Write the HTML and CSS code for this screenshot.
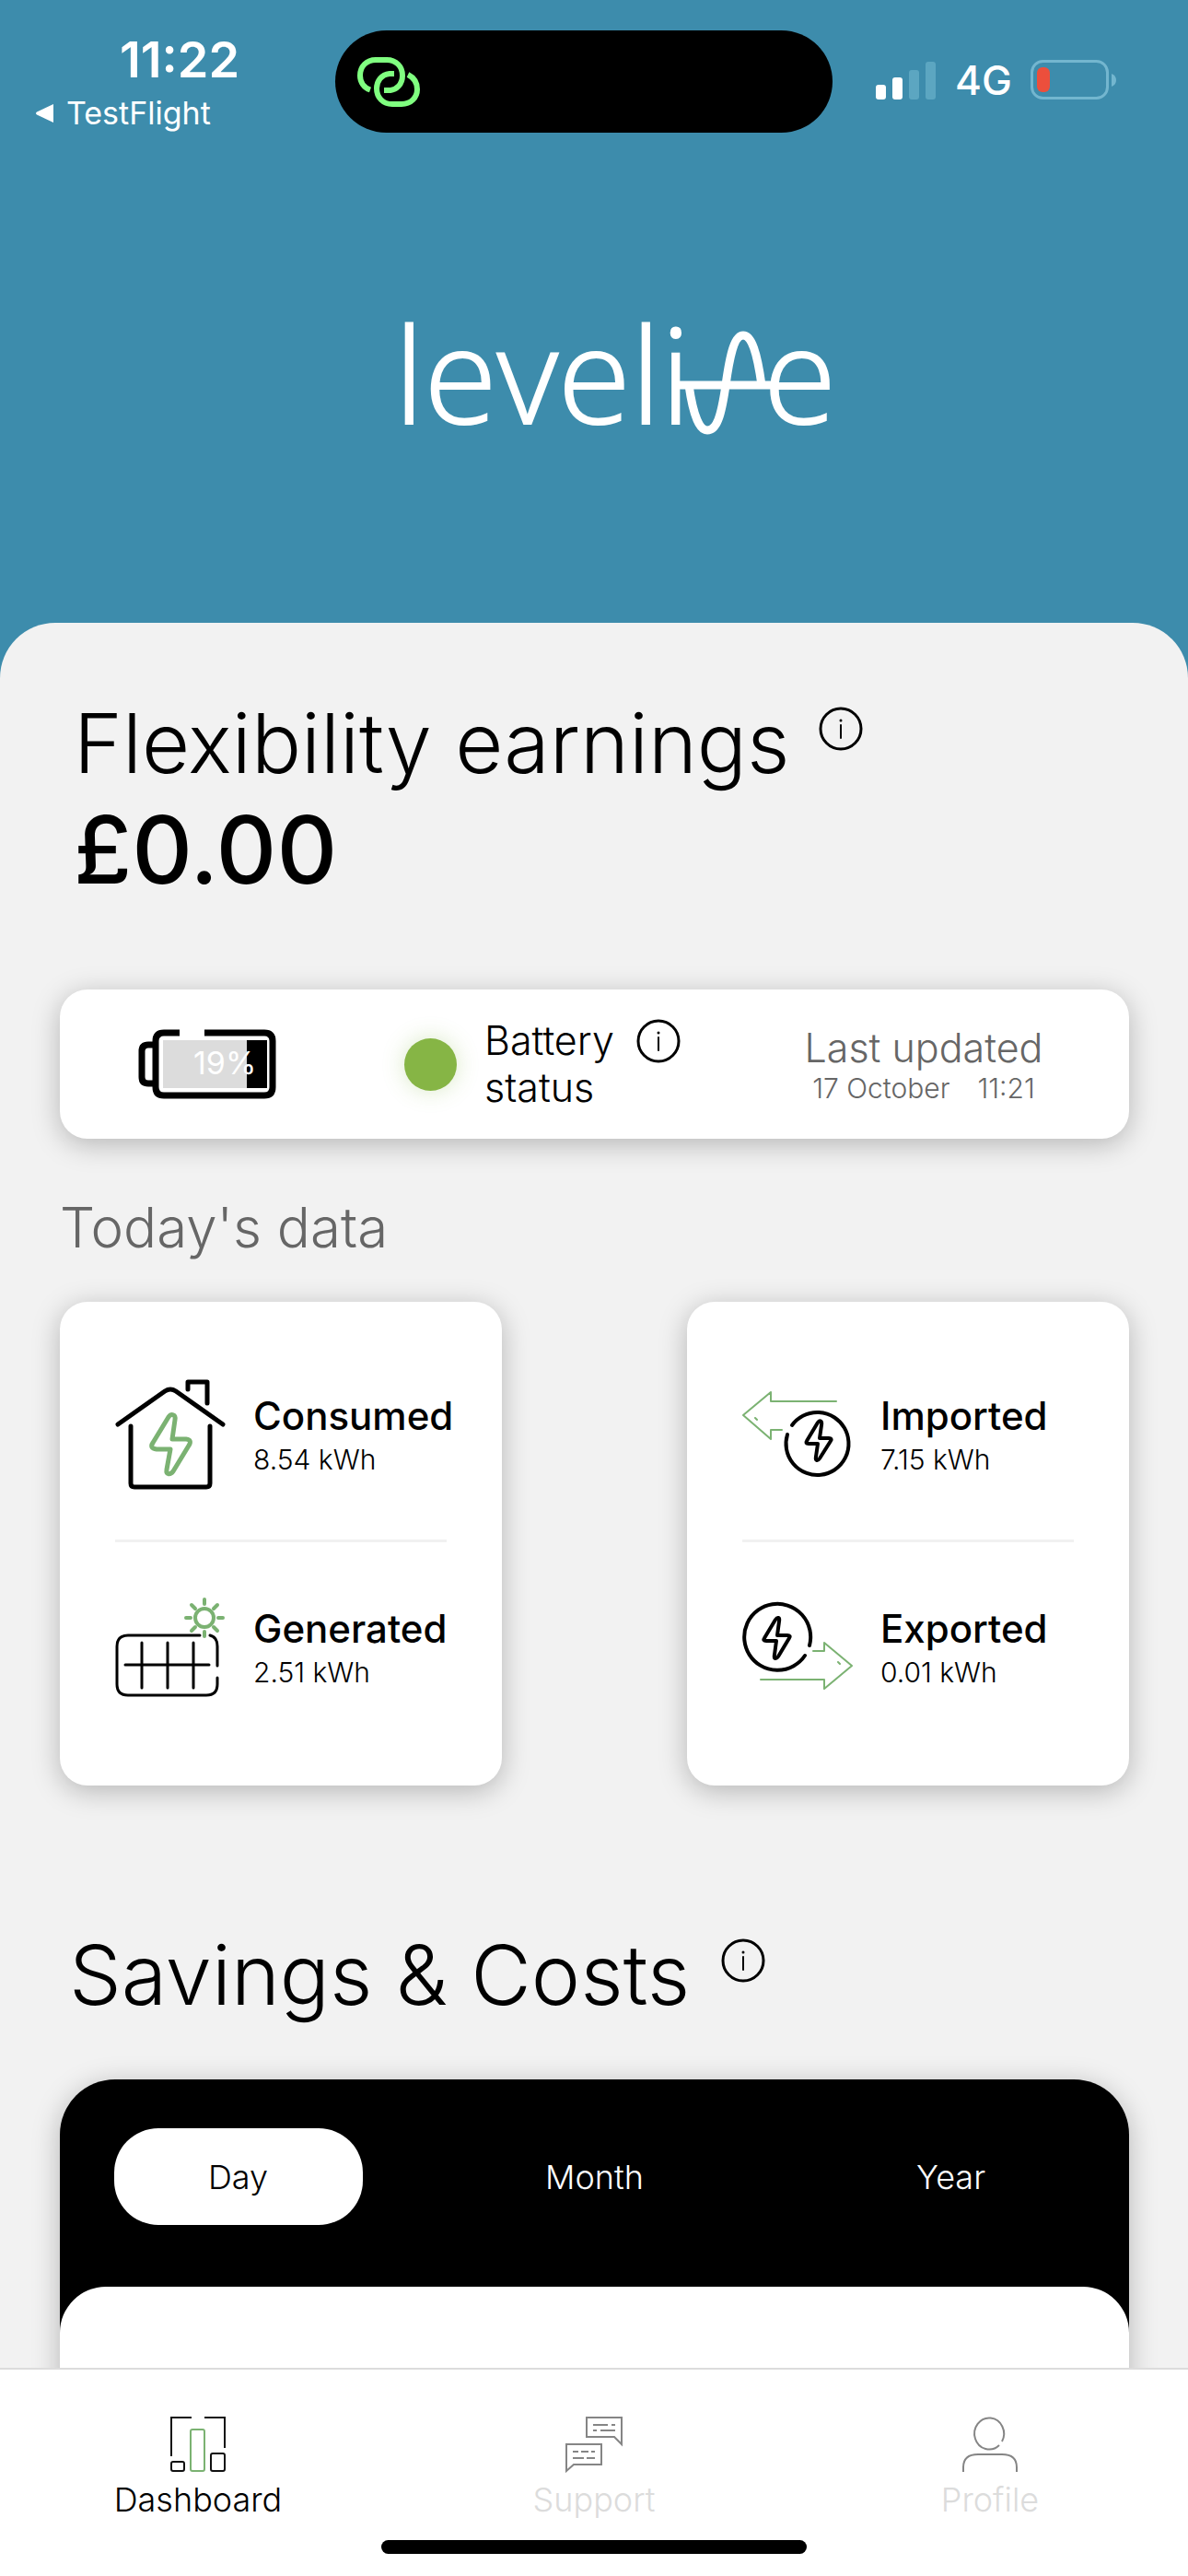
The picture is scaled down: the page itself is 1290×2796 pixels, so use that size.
FILE: index.html
```html
<!DOCTYPE html>
<html lang="en">
<head>
	<title>Levelise Dashboard</title>
	<meta charset="utf-8">
	<meta name="viewport" content="width=device-width, initial-scale=1">
	<link rel="stylesheet" href="styles.css">
</head>
<body>
	<div class="status-bar">
		<div class="status-left">
			<span class="time">11:22</span>
			<a class="back-link" href="#">
				<svg width="22" height="22" viewBox="0 0 22 22"><path d="M20 1v20L2 12.500q-2-1.500 0-3z" fill="#fff"/></svg>
				TestFlight
			</a>
		</div>
		<div class="island">
			<svg width="68" height="54" viewBox="0 0 68 54" fill="none" stroke="#80ff80" stroke-width="6">
				<path d="M14 35.500C7 33 3 27 3 20 3 10 10 3 20 3h12c10 0 17 7 17 17s-7 15.500-13 16h-7"/>
				<path d="M40 18h-5c-9 1-14 8-14 16 0 10 7 17 17 17h10c10 0 17-7 17-16 0-8-4-13-10-16"/>
			</svg>
		</div>
		<div class="status-right">
			<svg width="66" height="42" viewBox="0 0 66 42" fill="#fff">
				<rect x="0" y="26" width="11" height="16" rx="3"/>
				<rect x="18" y="18" width="11" height="24" rx="3"/>
				<rect x="36" y="10" width="11" height="32" rx="3" fill="#5ca6c1"/>
				<rect x="54" y="1" width="11" height="41" rx="3" fill="#5ca6c1"/>
			</svg>
			<span class="network">4G</span>
			<svg width="94" height="44" viewBox="0 0 94 44">
				<rect x="1.500" y="1.500" width="82" height="40" rx="12" fill="none" stroke="#73b6cf" stroke-width="3"/>
				<path d="M88 15q5 2 5 7t-5 7z" fill="#73b6cf"/>
				<rect x="7" y="8" width="14" height="27" rx="6" fill="#ec4f3c"/>
			</svg>
		</div>
	</div>

	<header class="brand">
		<svg width="490" height="204" viewBox="-10 -40 490 204" role="img" aria-label="levelise">
			<text class="logo-text" x="-3" y="119">leveli</text>
			<text class="logo-text" x="398" y="119">e</text>
			<path d="M302 77h108M317 77c5 35 12 49 20 49 10 0 15-14 20-49 5-36 10-54 19-54s15 18 20 54" fill="none" stroke="#fff" stroke-width="9"/>
		</svg>
	</header>

	<main class="panel">
		<section class="earnings">
			<div class="title-row">
				<h1>Flexibility earnings</h1>
				<button class="info" aria-label="About flexibility earnings">
					<svg width="48" height="48" viewBox="0 0 48 48"><use href="#info-icon"/></svg>
				</button>
			</div>
			<p class="amount">£0.00</p>
		</section>

		<section class="card battery-card">
			<div class="battery-cell">
				<svg width="150" height="76" viewBox="0 0 150 76">
					<path d="M45 4H28q-9 0-9 9v50q0 9 9 9h109q9 0 9-9V13q0-9-9-9H72M19 17h-8q-7 0-7 7v28q0 7 7 7h8" fill="none" stroke="#000" stroke-width="7"/>
					<rect x="27" y="12" width="91" height="52" fill="#dcdcdc"/>
					<rect x="118" y="12" width="22" height="52"/>
					<text class="charge" x="60" y="49">19%</text>
				</svg>
			</div>
			<div class="battery-cell battery-status">
				<span class="dot"></span>
				<span class="battery-label">Battery<br>status</span>
				<button class="info" aria-label="About battery status">
					<svg width="48" height="48" viewBox="0 0 48 48"><use href="#info-icon"/></svg>
				</button>
			</div>
			<div class="battery-cell updated">
				<span class="updated-title">Last updated</span>
				<span class="updated-time"><span>17 October</span><span>11:21</span></span>
			</div>
		</section>

		<h2 class="today">Today's data</h2>

		<section class="data-cards">
			<div class="card data-card">
				<div class="data-row">
					<svg width="120" height="120" viewBox="0 0 120 120" fill="none" stroke="#000" stroke-width="5" stroke-linecap="round" stroke-linejoin="round">
						<path d="M3 49 54 13q6-4 12 0l51 36M79 11V3h21v23M17 51v62q0 4 4 4h78q4 0 4-4V51"/>
						<path d="M58 41 41 69q-4 6 4 7h15l-4 22c-1 6 4 6 7 2l17-28q4-6-3-7H62l3-21c1-6-4-7-7-3z" stroke="#7bb272"/>
					</svg>
					<div class="data-text">
						<span class="data-name">Consumed</span>
						<span class="data-value">8.54 kWh</span>
					</div>
				</div>
				<div class="data-row">
					<svg width="120" height="120" viewBox="0 0 120 120" fill="none" stroke="#000" stroke-width="3" stroke-linecap="round">
						<path d="M92 47H14Q2 47 2 59v41q0 12 12 12h85q12 0 12-12V93M103 47q8 2 8 12v21M11 79h91M29 55v49M57 55v49M85 55v49"/>
						<g stroke="#7bb272" stroke-width="4">
							<circle cx="97" cy="28" r="10"/>
							<path d="M97 8v5M97 43v5M77 28h5M112 28h5M83 14l4 4M107 38l4 4M111 14l-4 4M87 38l-4 4"/>
						</g>
					</svg>
					<div class="data-text">
						<span class="data-name">Generated</span>
						<span class="data-value">2.51 kWh</span>
					</div>
				</div>
			</div>

			<div class="card data-card">
				<div class="data-row">
					<svg width="120" height="120" viewBox="0 0 120 120" fill="none" stroke="#000" stroke-width="4" stroke-linecap="round" stroke-linejoin="round">
						<path d="M102 24H31V14L1 39l30 26V55h12M14 42l2 2" stroke="#7bb272" stroke-width="2"/>
						<path d="M54 50A34 34 0 1 1 49 60"/>
						<path d="M82 47 70 67q-2 3 2 3h10l-2 14c-1 5 2 5 4 2l12-19q2-3-2-3H84l2-14c1-5-2-6-4-3z"/>
					</svg>
					<div class="data-text">
						<span class="data-name">Imported</span>
						<span class="data-value">7.15 kWh</span>
					</div>
				</div>
				<div class="data-row">
					<svg width="120" height="120" viewBox="0 0 120 120" fill="none" stroke="#000" stroke-width="4" stroke-linecap="round" stroke-linejoin="round">
						<path d="M77 64h12V55l30 25-30 25V95H20M104 76l2 2" stroke="#7bb272" stroke-width="2"/>
						<path d="M73 58A36 36 0 1 0 68 69"/>
						<path d="M36 30 24 50q-2 3 2 3h11l-2 15c-1 5 2 5 4 2l12-20q2-3-2-3H38l2-15c1-5-2-5-4-2z"/>
					</svg>
					<div class="data-text">
						<span class="data-name">Exported</span>
						<span class="data-value">0.01 kWh</span>
					</div>
				</div>
			</div>
		</section>

		<section class="savings">
			<div class="title-row">
				<h1>Savings &amp; Costs</h1>
				<button class="info" aria-label="About savings and costs">
					<svg width="48" height="48" viewBox="0 0 48 48"><use href="#info-icon"/></svg>
				</button>
			</div>
			<div class="savings-card">
				<div class="periods">
					<button class="period active">Day</button>
					<button class="period">Month</button>
					<button class="period">Year</button>
				</div>
				<div class="savings-body"></div>
			</div>
		</section>
	</main>

	<nav class="tab-bar">
		<div class="tabs">
			<a class="tab active" href="#">
				<svg width="62" height="62" viewBox="0 0 62 62" fill="none" stroke="#111" stroke-width="2">
					<path d="M2 44V2h22M38 2h22v33"/>
					<rect x="2" y="50" width="14" height="10" rx="2"/>
					<rect x="45" y="41" width="15" height="19" rx="2"/>
					<rect x="23" y="15" width="15" height="45" rx="2" stroke="#7bb272"/>
				</svg>
				Dashboard
			</a>
			<a class="tab" href="#">
				<svg width="62" height="62" viewBox="0 0 62 62" fill="none" stroke="#858585" stroke-width="2">
					<path d="M23 2h38v29l-8-8H23zM30 10h16M50 10h4M30 16h4M38 16h16"/>
					<path d="M1 31h38v22H9l-8 7zM8 39h6M17 39h8M28 39h4M8 46h12M23 46h9"/>
				</svg>
				Support
			</a>
			<a class="tab" href="#">
				<svg width="62" height="62" viewBox="0 0 62 62" fill="none" stroke="#858585" stroke-width="2">
					<path d="M41 32a16 17 0 1 1 3-4M2 61V56Q2 42 18 42h26q16 0 16 14v5"/>
				</svg>
				Profile
			</a>
		</div>
		<div class="home-indicator"></div>
	</nav>

	<!-- shared icons -->
	<svg class="sprite">
		<symbol id="info-icon" viewBox="0 0 48 48">
			<circle cx="24" cy="24" r="22" fill="none" stroke="#000" stroke-width="3"/>
			<path d="M24 20v14" stroke="#000" stroke-width="2" stroke-linecap="round"/>
			<circle cx="24" cy="15" r="1.500"/>
		</symbol>
	</svg>
</body>
</html>
```
FILE: styles.css
```css
* {
	box-sizing: border-box;
}

body {
	display: flex;
	flex-direction: column;
	height: 100vh;
	margin: 0;
	font-family: Inter, "Liberation Sans", sans-serif;
	font-weight: 300;
	background-color: #3d8cac;
	color: #000000;
	overflow: hidden;
}

h1, h2, p {
	margin: 0;
	font-weight: 300;
}

a {
	color: inherit;
	text-decoration: none;
}

button {
	border: none;
	padding: 0;
	background: none;
	font: inherit;
	cursor: pointer;
}

svg {
	display: block;
	flex-shrink: 0;
}

.sprite {
	position: absolute;
	width: 0;
	height: 0;
}

/* status bar */
.status-bar {
	display: grid;
	grid-template-columns: 1fr 540px 1fr;
	padding: 33px 22px 0 0;
	color: #ffffff;
}

.status-left {
	display: flex;
	flex-direction: column;
	padding: 0 12px 0 38px;
}

.time {
	font-size: 54px;
	line-height: 64px;
	font-weight: 600;
	text-align: center;
}

.back-link {
	display: flex;
	align-items: center;
	gap: 12px;
	font-size: 34px;
	line-height: 52px;
	font-weight: 400;
}

.island {
	display: flex;
	align-items: center;
	height: 111px;
	padding-left: 24px;
	border-radius: 56px;
	background-color: #000000;
}

.status-right {
	display: flex;
	align-items: center;
	gap: 20px;
	height: 108px;
	padding-left: 47px;
}

.network {
	font-size: 44px;
	line-height: 52px;
	font-weight: 500;
}

/* logo */
.brand {
	display: flex;
	justify-content: center;
	padding: 152px 0 171px 42px;
}

.logo-text {
	font-family: "Open Sans", sans-serif;
	font-size: 144px;
	font-weight: 300;
	fill: #ffffff;
	stroke: #ffffff;
	stroke-width: 2px;
}

/* content */
.panel {
	flex: 1;
	min-height: 0;
	overflow: hidden;
	padding: 76px 64px 0 65px;
	border-radius: 60px 60px 0 0;
	background-color: #f2f2f2;
}

.title-row {
	display: flex;
	gap: 31px;
}

.title-row .info {
	margin-top: 15px;
}

.info {
	align-self: flex-start;
}

h1 {
	font-size: 90px;
	line-height: 110px;
}

.earnings {
	padding-left: 15px;
}

.amount {
	font-size: 102px;
	line-height: 120px;
	font-weight: 500;
}

.card {
	border-radius: 30px;
	background-color: #ffffff;
	box-shadow: 0 6px 30px rgba(0, 0, 0, 0.25);
}

.battery-card {
	display: grid;
	grid-template-columns: 320px 1fr 446px;
	align-items: center;
	height: 162px;
	margin-top: 92px;
}

.battery-cell {
	display: flex;
	justify-content: center;
}

.charge {
	font-size: 34px;
	font-weight: 400;
	fill: #ffffff;
}

.battery-status {
	align-items: center;
	justify-content: flex-start;
	padding-left: 54px;
}

.dot {
	width: 57px;
	height: 57px;
	border-radius: 50%;
	background-color: #86b545;
	box-shadow: 0 0 24px rgba(134, 181, 69, 0.3);
}

.battery-label {
	margin: 0 24px 0 30px;
	font-size: 43px;
	line-height: 51px;
}

.battery-status .info {
	margin-top: 2px;
}

.updated {
	flex-direction: column;
	align-items: center;
	color: #666666;
}

.updated-title {
	font-size: 43px;
	line-height: 51px;
}

.updated-time {
	display: flex;
	gap: 30px;
	font-size: 30px;
	line-height: 36px;
}

.today {
	margin-top: 60px;
	font-size: 60px;
	line-height: 73px;
	color: #666666;
}

.data-cards {
	display: flex;
	justify-content: space-between;
	margin-top: 44px;
}

.data-card {
	width: 480px;
	height: 525px;
	padding: 30px 60px;
}

.data-row {
	display: flex;
	align-items: center;
	gap: 30px;
	height: 228px;
}

.data-row + .data-row {
	height: 231px;
	border-top: 3px solid #f1f1f1;
}

.data-text {
	display: flex;
	flex-direction: column;
	gap: 4px;
	white-space: nowrap;
}

.data-name {
	font-size: 42px;
	line-height: 50px;
	font-weight: 500;
}

.data-value {
	font-size: 30px;
	line-height: 36px;
}

.savings {
	margin-top: 151px;
}

.savings .title-row {
	padding-left: 10px;
	gap: 34px;
}

.savings-card {
	margin-top: 58px;
	border-radius: 60px 60px 30px 30px;
	background-color: #000000;
	box-shadow: 0 6px 30px rgba(0, 0, 0, 0.25);
}

.periods {
	display: grid;
	grid-template-columns: repeat(3, 1fr);
	justify-items: center;
	padding: 53px 0 67px;
}

.period {
	width: 270px;
	height: 105px;
	border-radius: 48px;
	font-size: 36px;
	color: #ffffff;
}

.period.active {
	background-color: #ffffff;
	color: #000000;
}

.savings-body {
	height: 600px;
	border-radius: 50px 50px 30px 30px;
	background-color: #ffffff;
}

/* bottom navigation */
.tab-bar {
	border-top: 2px solid #dcdcdc;
	background-color: #ffffff;
}

.tabs {
	display: grid;
	grid-template-columns: repeat(3, 1fr);
	padding-top: 50px;
}

.tab {
	display: flex;
	flex-direction: column;
	align-items: center;
	gap: 5px;
	font-size: 36px;
	line-height: 48px;
	color: #dcdcdc;
}

.tab.active {
	color: #000000;
}

.home-indicator {
	width: 462px;
	height: 15px;
	margin: 20px auto 24px;
	border-radius: 8px;
	background-color: #000000;
}
```
